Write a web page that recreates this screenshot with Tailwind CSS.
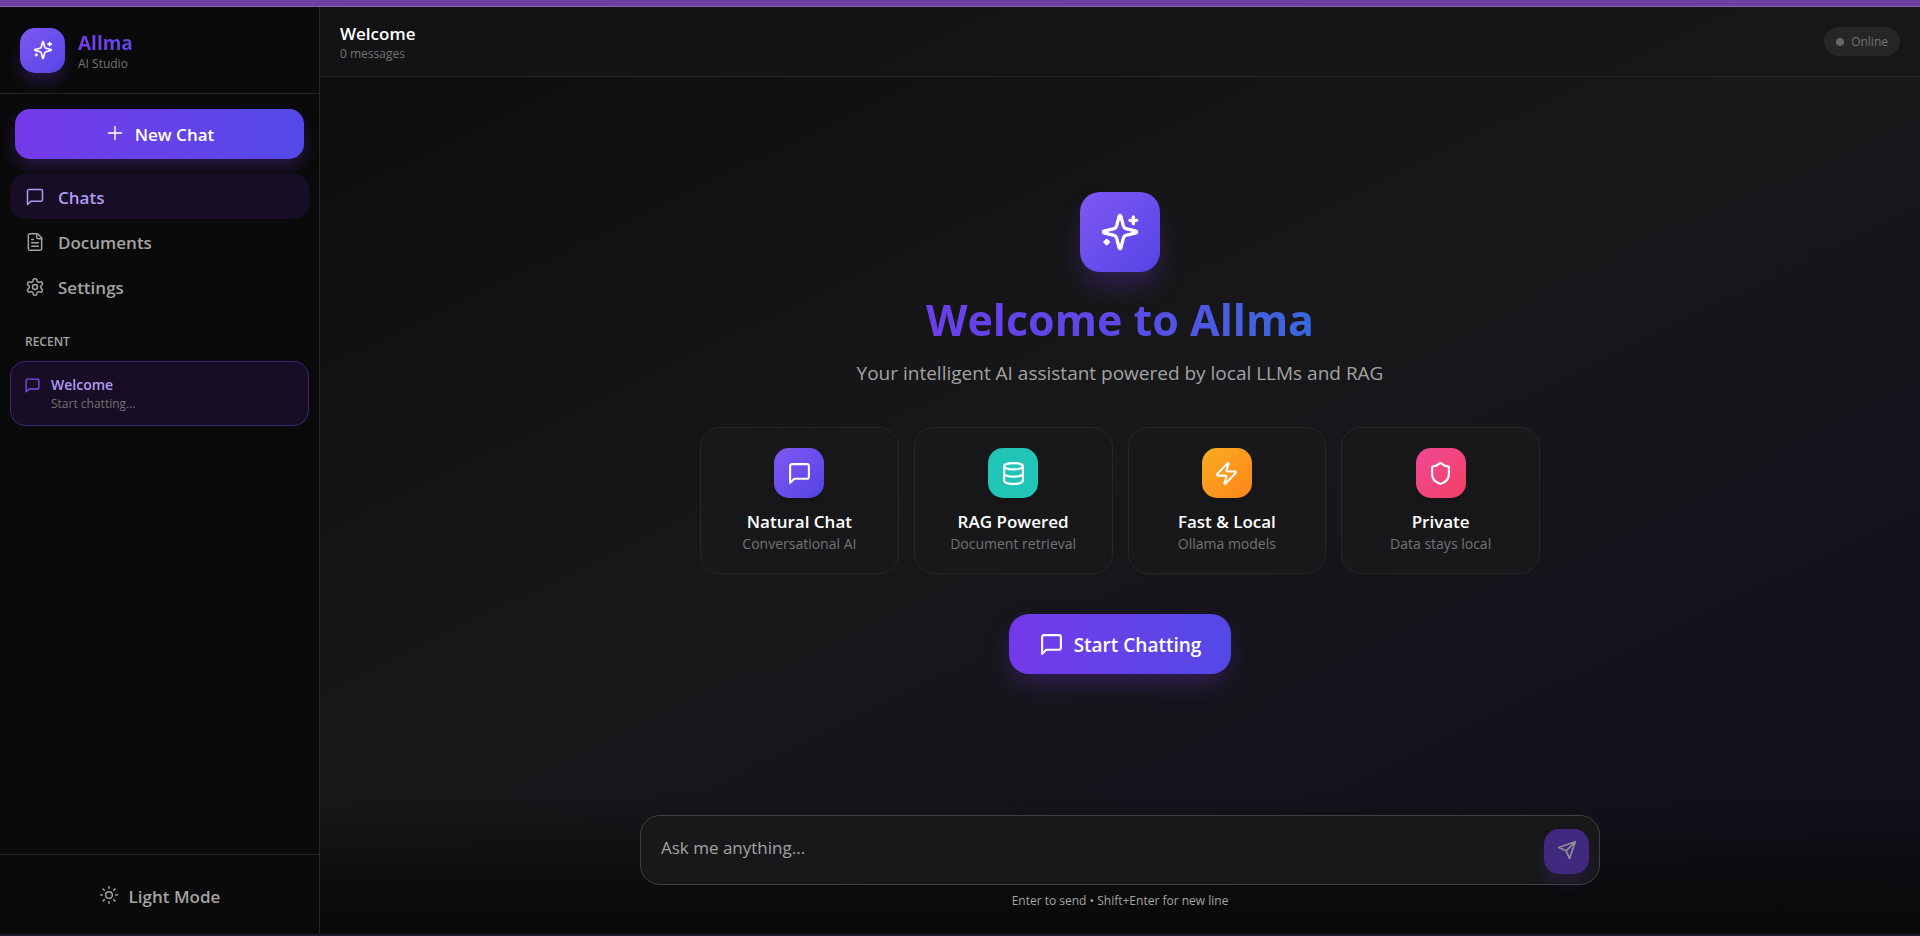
<!DOCTYPE html>
<html lang="en">
<head>
    <meta charset="UTF-8">
    <meta name="viewport" content="width=device-width, initial-scale=1.0">
    <title>Allma AI Studio</title>
    <script src="https://cdn.jsdelivr.net/npm/@tailwindcss/browser@4"></script>
</head>
<body class="flex flex-col min-h-screen bg-[#0a0a0a] text-white font-['Open_Sans','Noto_Sans',sans-serif]">
    <!-- Shared icons -->
    <svg class="hidden" aria-hidden="true">
        <symbol id="sparkles" viewBox="0 0 24 24">
            <path d="M9.937 15.5A2 2 0 0 0 8.5 14.063l-6.135-1.582a.5.5 0 0 1 0-.962L8.5 9.936A2 2 0 0 0 9.937 8.5l1.582-6.135a.5.5 0 0 1 .963 0L14.063 8.5A2 2 0 0 0 15.5 9.937l6.135 1.581a.5.5 0 0 1 0 .964L15.5 14.063a2 2 0 0 0-1.437 1.437l-1.582 6.135a.5.5 0 0 1-.963 0z"/>
            <path d="M20 3v4M22 5h-4M4 17v2M5 18H3"/>
        </symbol>
        <symbol id="message" viewBox="0 0 24 24">
            <path d="M21 15a2 2 0 0 1-2 2H7l-4 4V5a2 2 0 0 1 2-2h14a2 2 0 0 1 2 2z"/>
        </symbol>
    </svg>

    <div class="h-[7px] bg-[#6c409f] border-b border-[#8d63b8]"></div>

    <div class="flex flex-1 bg-linear-to-br from-[#0a0a0a] via-[#18181a] to-[#120d1c]">
        <!-- Sidebar -->
        <aside class="w-80 shrink-0 flex flex-col bg-[#0a0a0a] border-r border-[#262626]">
            <div class="flex items-center gap-[13px] px-5 h-[87px] border-b border-[#262626]">
                <div class="w-[45px] h-[45px] rounded-[15px] flex items-center justify-center bg-linear-to-br from-[#8058f3] to-[#5443e5] shadow-[0_10px_16px_-2px_rgba(124,58,237,0.25)]">
                    <svg class="w-5 h-5 fill-none stroke-white stroke-2" stroke-linecap="round" stroke-linejoin="round"><use href="#sparkles"/></svg>
                </div>
                <div class="pt-1">
                    <h1 class="text-[19px] leading-6 font-bold bg-linear-to-r from-[#7c3aed] to-[#5848e5] bg-clip-text text-transparent">Allma</h1>
                    <p class="text-xs leading-[18px] text-[#737373]">AI Studio</p>
                </div>
            </div>

            <div class="px-[15px] pt-[15px]">
                <button class="w-full h-[50px] pt-0.5 rounded-[15px] flex items-center justify-center gap-2.5 text-[17px] font-semibold bg-linear-to-r from-[#7439ea] to-[#5349e6] shadow-[0_8px_18px_-2px_rgba(124,58,237,0.3)]">
                    <svg class="w-5 h-5 mb-1 fill-none stroke-white" stroke-width="1.7" stroke-linecap="round" viewBox="0 0 24 24"><path d="M4 12h16M12 4v16"/></svg>
                    New Chat
                </button>
            </div>

            <nav class="flex flex-col px-2.5 pt-[15px] text-[17px] font-semibold text-[#a3a3a3]">
                <a href="#chats" class="flex items-center gap-[13px] h-[45px] px-[15px] rounded-[15px] bg-[#170d24] text-[#b39af5]">
                    <svg class="w-5 h-5 fill-none stroke-current" stroke-width="1.8" stroke-linecap="round" stroke-linejoin="round"><use href="#message"/></svg>
                    <span class="pt-0.5">Chats</span>
                </a>
                <a href="#documents" class="flex items-center gap-[13px] h-[45px] px-[15px] rounded-[15px]">
                    <svg class="w-5 h-5 fill-none stroke-current" stroke-width="1.8" stroke-linecap="round" stroke-linejoin="round" viewBox="0 0 24 24"><path d="M15 2H6a2 2 0 0 0-2 2v16a2 2 0 0 0 2 2h12a2 2 0 0 0 2-2V7z"/><path d="M14 2v4a2 2 0 0 0 2 2h4M10 9H8M16 13H8M16 17H8"/></svg>
                    <span class="pt-0.5">Documents</span>
                </a>
                <a href="#settings" class="flex items-center gap-[13px] h-[45px] px-[15px] rounded-[15px]">
                    <svg class="w-5 h-5 fill-none stroke-current" stroke-width="1.8" stroke-linecap="round" stroke-linejoin="round" viewBox="0 0 24 24"><path d="M12.22 2h-.44a2 2 0 0 0-2 2v.18a2 2 0 0 1-1 1.73l-.43.25a2 2 0 0 1-2 0l-.15-.08a2 2 0 0 0-2.73.73l-.22.38a2 2 0 0 0 .73 2.73l.15.1a2 2 0 0 1 1 1.72v.51a2 2 0 0 1-1 1.74l-.15.09a2 2 0 0 0-.73 2.73l.22.38a2 2 0 0 0 2.73.73l.15-.08a2 2 0 0 1 2 0l.43.25a2 2 0 0 1 1 1.73V20a2 2 0 0 0 2 2h.44a2 2 0 0 0 2-2v-.18a2 2 0 0 1 1-1.73l.43-.25a2 2 0 0 1 2 0l.15.08a2 2 0 0 0 2.73-.73l.22-.39a2 2 0 0 0-.73-2.73l-.15-.08a2 2 0 0 1-1-1.74v-.5a2 2 0 0 1 1-1.74l.15-.09a2 2 0 0 0 .73-2.73l-.22-.38a2 2 0 0 0-2.73-.73l-.15.08a2 2 0 0 1-2 0l-.43-.25a2 2 0 0 1-1-1.73V4a2 2 0 0 0-2-2z"/><circle cx="12" cy="12" r="3"/></svg>
                    <span class="pt-0.5">Settings</span>
                </a>
            </nav>

            <section class="flex-1 px-2.5 pt-[23px]">
                <h2 class="px-[15px] text-xs leading-5 font-semibold text-[#a3a3a3]">RECENT</h2>
                <a href="#welcome" class="mt-[9px] flex gap-2.5 h-[65px] px-[13px] pt-[13px] rounded-[15px] border border-[#3b2678] bg-[#170d24]">
                    <svg class="w-[17px] h-[17px] mt-0.5 fill-none stroke-[#7c4df0]" stroke-width="1.9" stroke-linecap="round" stroke-linejoin="round"><use href="#message"/></svg>
                    <span>
                        <span class="block text-sm leading-5 font-semibold text-[#b39af5]">Welcome</span>
                        <span class="block text-xs leading-[18px] text-[#737373]">Start chatting...</span>
                    </span>
                </a>
            </section>

            <div class="h-20 pt-1 border-t border-[#262626] flex items-center justify-center">
                <button class="flex items-center gap-2.5 text-[17px] font-semibold text-[#a3a3a3]">
                    <svg class="w-5 h-5 mb-1 fill-none stroke-current" stroke-width="1.8" stroke-linecap="round" viewBox="0 0 24 24"><circle cx="12" cy="12" r="4"/><path d="M12 2v2M12 20v2M4.93 4.93l1.41 1.41M17.66 17.66l1.41 1.41M2 12h2M20 12h2M6.34 17.66l-1.41 1.41M19.07 4.93l-1.41 1.41"/></svg>
                    Light Mode
                </button>
            </div>
        </aside>

        <!-- Main area -->
        <main class="flex-1 flex flex-col">
            <header class="flex items-center justify-between h-[70px] px-5 border-b border-[#262626] bg-[#18181b]/60">
                <div class="pt-0.5">
                    <h2 class="text-[17px] leading-[22px] font-semibold">Welcome</h2>
                    <p class="text-xs leading-[18px] text-[#737373]">0 messages</p>
                </div>
                <div class="flex items-center gap-[7px] h-[29px] px-3 rounded-full bg-[#262626] text-xs text-[#737373]">
                    <span class="w-2 h-2 rounded-full bg-[#666]"></span>
                    Online
                </div>
            </header>

            <section class="flex-1 flex flex-col items-center pt-[115px]">
                <div class="w-20 h-20 rounded-[20px] flex items-center justify-center bg-linear-to-br from-[#8058f3] to-[#5443e5] shadow-[0_16px_26px_-2px_rgba(124,58,237,0.25)]">
                    <svg class="w-10 h-10 fill-none stroke-white stroke-2" stroke-linecap="round" stroke-linejoin="round"><use href="#sparkles"/></svg>
                </div>
                <h1 class="mt-5 text-[43px] leading-[56px] font-bold bg-linear-to-r from-[#6a3fea] via-[#5b49e6] via-50% to-[#3569dd] bg-clip-text text-transparent">Welcome to Allma</h1>
                <p class="mt-2.5 text-[19px] leading-[30px] text-[#a3a3a3]">Your intelligent AI assistant powered by local LLMs and RAG</p>

                <div class="mt-[39px] grid grid-cols-4 gap-[15px] w-full max-w-[840px]">
                    <article class="h-[147px] flex flex-col items-center pt-5 rounded-[20px] border border-[#262629] bg-[#18181a]">
                        <div class="w-[50px] h-[50px] rounded-[15px] flex items-center justify-center bg-linear-to-br from-[#8058f3] to-[#5443e5] shadow-lg">
                            <svg class="w-[25px] h-[25px] fill-none stroke-white stroke-2" stroke-linecap="round" stroke-linejoin="round"><use href="#message"/></svg>
                        </div>
                        <h3 class="mt-3 text-[17px] leading-6 font-semibold">Natural Chat</h3>
                        <p class="text-sm leading-5 text-[#737373]">Conversational AI</p>
                    </article>
                    <article class="h-[147px] flex flex-col items-center pt-5 rounded-[20px] border border-[#262629] bg-[#18181a]">
                        <div class="w-[50px] h-[50px] rounded-[15px] flex items-center justify-center bg-[#21c5b7] shadow-lg">
                            <svg class="w-[25px] h-[25px] fill-none stroke-white stroke-2" stroke-linecap="round" stroke-linejoin="round" viewBox="0 0 24 24"><ellipse cx="12" cy="5" rx="9" ry="3"/><path d="M3 5v14a9 3 0 0 0 18 0V5M3 12a9 3 0 0 0 18 0"/></svg>
                        </div>
                        <h3 class="mt-3 text-[17px] leading-6 font-semibold">RAG Powered</h3>
                        <p class="text-sm leading-5 text-[#737373]">Document retrieval</p>
                    </article>
                    <article class="h-[147px] flex flex-col items-center pt-5 rounded-[20px] border border-[#262629] bg-[#18181a]">
                        <div class="w-[50px] h-[50px] rounded-[15px] flex items-center justify-center bg-linear-to-br from-[#fbab23] to-[#fb8518] shadow-lg">
                            <svg class="w-[25px] h-[25px] fill-none stroke-white stroke-2" stroke-linecap="round" stroke-linejoin="round" viewBox="0 0 24 24"><path d="M4 14a1 1 0 0 1-.78-1.63l9.9-10.2a.5.5 0 0 1 .86.46l-1.92 6.02A1 1 0 0 0 13 10h7a1 1 0 0 1 .78 1.63l-9.9 10.2a.5.5 0 0 1-.86-.46l1.92-6.02A1 1 0 0 0 11 14z"/></svg>
                        </div>
                        <h3 class="mt-3 text-[17px] leading-6 font-semibold">Fast &amp; Local</h3>
                        <p class="text-sm leading-5 text-[#737373]">Ollama models</p>
                    </article>
                    <article class="h-[147px] flex flex-col items-center pt-5 rounded-[20px] border border-[#262629] bg-[#18181a]">
                        <div class="w-[50px] h-[50px] rounded-[15px] flex items-center justify-center bg-linear-to-br from-[#ef4996] to-[#f43f63] shadow-lg">
                            <svg class="w-[25px] h-[25px] fill-none stroke-white stroke-2" stroke-linecap="round" stroke-linejoin="round" viewBox="0 0 24 24"><path d="M20 13c0 5-3.5 7.5-7.66 8.95a1 1 0 0 1-.67-.01C7.5 20.5 4 18 4 13V6a1 1 0 0 1 1-1c2 0 4.5-1.2 6.24-2.72a1.17 1.17 0 0 1 1.52 0C14.51 3.81 17 5 19 5a1 1 0 0 1 1 1z"/></svg>
                        </div>
                        <h3 class="mt-3 text-[17px] leading-6 font-semibold">Private</h3>
                        <p class="text-sm leading-5 text-[#737373]">Data stays local</p>
                    </article>
                </div>

                <button class="mt-10 h-[60px] px-[30px] rounded-[20px] flex items-center gap-2.5 text-[19px] font-semibold bg-linear-to-r from-[#7439ea] to-[#5349e6] shadow-[0_12px_24px_-2px_rgba(124,58,237,0.25)]">
                    <svg class="w-[25px] h-[25px] fill-none stroke-white stroke-2" stroke-linecap="round" stroke-linejoin="round"><use href="#message"/></svg>
                    <span class="pt-0.5">Start Chatting</span>
                </button>
            </section>

            <!-- Message box -->
            <form class="pt-5 px-5 pb-6 bg-linear-to-t from-[#0a0a0a] from-15% to-transparent">
                <div class="mx-auto w-full max-w-[960px] flex items-end gap-3 h-[70px] pl-5 pr-2.5 pb-2.5 rounded-[20px] border border-[#404040] bg-[#18181a]">
                    <input type="text" aria-label="Message" placeholder="Ask me anything..." class="flex-1 h-[45px] pb-2 bg-transparent outline-none text-[17px] placeholder:text-[#a3a3a3]">
                    <button type="button" aria-label="Send" class="w-[45px] h-[45px] rounded-[15px] flex items-center justify-center bg-[#3f2a80] shadow-[0_10px_16px_-2px_rgba(124,58,237,0.15)]">
                        <svg class="w-5 h-5 mb-1 fill-none stroke-[#929092] stroke-2" stroke-linecap="round" stroke-linejoin="round" viewBox="0 0 24 24"><path d="M22 2 11 13M22 2l-7 20-4-9-9-4Z"/></svg>
                    </button>
                </div>
                <p class="mt-[7px] text-center text-xs leading-[18px] text-[#a3a3a3]">Enter to send • Shift+Enter for new line</p>
            </form>
        </main>
    </div>

    <div class="h-0.5 bg-[#21182b]"></div>
</body>
</html>
